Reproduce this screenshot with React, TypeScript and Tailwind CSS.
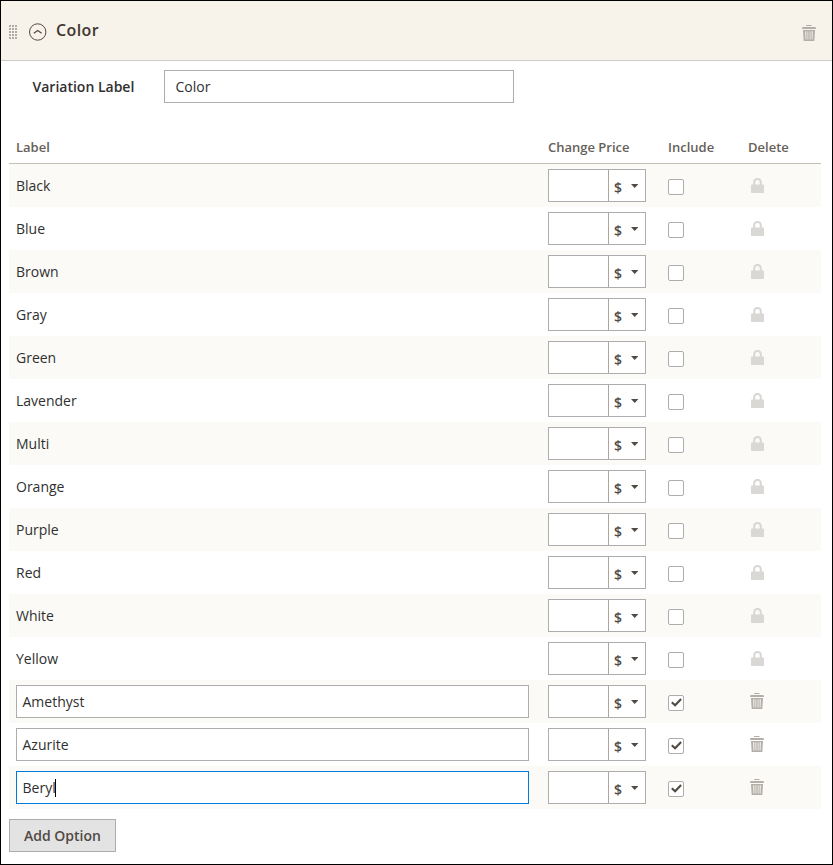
type Option = { label: string; custom?: boolean; focused?: boolean };

const options: Option[] = [
  { label: 'Black' },
  { label: 'Blue' },
  { label: 'Brown' },
  { label: 'Gray' },
  { label: 'Green' },
  { label: 'Lavender' },
  { label: 'Multi' },
  { label: 'Orange' },
  { label: 'Purple' },
  { label: 'Red' },
  { label: 'White' },
  { label: 'Yellow' },
  { label: 'Amethyst', custom: true },
  { label: 'Azurite', custom: true },
  { label: 'Beryl', custom: true, focused: true },
];

function TrashIcon() {
  return (
    <svg width="14" height="16" viewBox="0 0 14 16" className="block" fill="#b3aea8">
      <path d="M4 0h5.5v1H4z M.5 2h13l.5 2H0z" />
      <path fillRule="evenodd" d="M1 5h12l-.7 11H1.7z M3.2 6.2l.3 8.3h.8V6.2z M5.5 6.2v8.3h.8V6.2z M7.7 6.2v8.3h.8V6.2z M9.7 6.2v8.3h.8l.3-8.3z" />
    </svg>
  );
}

function LockIcon() {
  return (
    <svg width="13" height="15" viewBox="0 0 13 15" className="block">
      <path d="M3.2 7V4.2a3.3 3.3 0 0 1 6.6 0V7" fill="none" stroke="#dad8d5" strokeWidth="2.1" />
      <rect y="6.5" width="13" height="8.5" rx=".7" fill="#dad8d5" />
    </svg>
  );
}

function DragHandle() {
  const rows = [0, 3, 6, 9, 12];
  const columns = [0, 3, 6];
  return (
    <svg width="8" height="14" viewBox="0 0 8 14" className="mt-[3px] block" fill="#b0aca7" shapeRendering="crispEdges">
      {rows.map((y) => columns.map((x) => <rect key={`${x}-${y}`} x={x} y={y} width="2" height="2" />))}
    </svg>
  );
}

function PriceField() {
  return (
    <div className="flex h-[33px] w-[98px] border border-[#adadad] bg-white">
      <div className="w-[59px]" />
      <div className="flex flex-1 items-center border-l border-[#aca79d] pl-[5px]">
        <span className="w-[8px] pt-[5px] text-[14px] leading-5 font-semibold text-[#514943]">$</span>
        <svg width="8" height="4" viewBox="0 0 8 4" className="mt-px ml-[9px]">
          <path d="M0 0h7.4L3.7 4z" fill="#514943" />
        </svg>
      </div>
    </div>
  );
}

function Checkbox({ checked }: { checked: boolean }) {
  return (
    <div className="mt-[3px] flex size-4 items-center justify-center rounded-[2px] border border-[#adadad] bg-white">
      {checked && (
        <svg width="11" height="9" viewBox="0 0 11 9" className="-mt-px block">
          <path d="M.8 4.2L4.1 7.2L10.1 1" fill="none" stroke="#514943" strokeWidth="2.1" />
        </svg>
      )}
    </div>
  );
}

export default function App() {
  return (
    <div className="flex h-[865px] w-[833px] flex-col border border-black bg-white font-['Open_Sans','Noto_Sans',sans-serif] text-[14px] text-[#303030]">
      <header className="flex h-[60px] items-center border-b border-[#cccccc] bg-[#f7f3eb] pr-4 pl-2">
        <DragHandle />
        <svg width="18" height="18" viewBox="0 0 18 18" className="mt-[3px] ml-3 block" fill="none" stroke="#514943">
          <circle cx="8.7" cy="9" r="8.2" />
          <path d="M4.8 10.2L8.7 7.4l3.9 2.8" strokeWidth="1.2" />
        </svg>
        <h1 className="mb-[2px] ml-[9px] text-[16px] leading-6 font-semibold tracking-[.4px] text-[#41362f]">Color</h1>
        <div className="mt-[5px] ml-auto">
          <TrashIcon />
        </div>
      </header>
      <div className="mt-[9px] flex h-[33px] items-center">
        <label className="ml-[31.5px] w-[131.5px] font-semibold">Variation Label</label>
        <div className="flex h-[33px] w-[350px] items-center border border-[#adadad] pl-[10.5px]">Color</div>
      </div>
      <div className="mt-7 ml-2 flex h-[33px] w-[812px] items-center border-b border-[#c4bfb8] pt-[2px] pl-[7px] text-[13px] font-semibold text-[#666059]">
        <div className="w-[532px]">Label</div>
        <div className="w-[120px]">Change Price</div>
        <div className="w-[80px]">Include</div>
        <div>Delete</div>
      </div>
      {options.map(({ label, custom = false, focused = false }) => (
        <div key={label} className="ml-2 flex h-[43px] w-[812px] items-center pl-[7px] odd:bg-white even:bg-[#fbfaf6]">
          <div className="w-[532px]">
            {custom ? (
              <div className={`flex h-[33px] w-[513px] items-center border bg-white pl-[5.5px] ${focused ? 'border-[#007bdb]' : 'border-[#adadad]'}`}>
                {label}
                {focused && <span className="-ml-[.4px] h-[18px] w-px bg-black" />}
              </div>
            ) : (
              label
            )}
          </div>
          <div className="w-[120px]">
            <PriceField />
          </div>
          <div className="w-[80px]">
            <Checkbox checked={custom} />
          </div>
          <div className={custom ? '-mt-px ml-[2px]' : 'ml-[3.4px]'}>{custom ? <TrashIcon /> : <LockIcon />}</div>
        </div>
      ))}
      <button className="mt-[10px] ml-2 flex h-[33px] w-[107px] items-center justify-center border border-[#adadad] bg-[#e3e3e3] font-semibold text-[#514943]">
        Add Option
      </button>
    </div>
  );
}
